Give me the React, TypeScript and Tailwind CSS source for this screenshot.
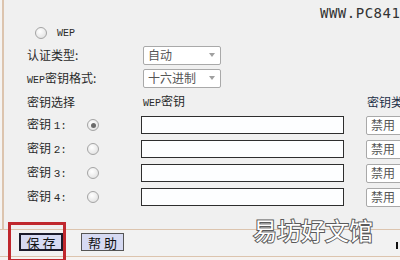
import React from "react";

const cjk = "font-['Noto_Sans_CJK_SC',sans-serif]";
const mono = "font-['Liberation_Mono','Noto_Sans_CJK_SC',monospace]";

const Radio = ({ checked = false }: { checked?: boolean }) => (
  <span className="flex h-[12px] w-[12px] shrink-0 items-center justify-center rounded-full border border-[#a4a4a4] bg-[radial-gradient(circle_at_40%_35%,#ffffff,#dcdcdc)]">
    {checked && <span className="h-[5px] w-[5px] rounded-full bg-[#6a6a6a]" />}
  </span>
);

const Select = ({ value, className = "" }: { value: string; className?: string }) => (
  <div
    className={`flex h-[19px] shrink-0 items-center justify-between rounded-[2px] border border-[#a9a9a9] bg-white pl-[4px] pr-[5px] text-[12px] text-[#555] ${className}`}
  >
    <span className="leading-none">{value}</span>
    <span className="h-0 w-0 border-x-[3px] border-t-[4px] border-x-transparent border-t-[#a0a0a0]" />
  </div>
);

const keys = [1, 2, 3, 4];

export default function App() {
  return (
    <div className={`relative h-[260px] w-[400px] overflow-hidden bg-[#f5f3f1] ${cjk} text-[#2a2a2a]`}>
      {/* main panel */}
      <div className="ml-[2px] h-[229px] overflow-hidden border-l-2 border-[#dcc4ae] bg-[#f0f0f0] pt-[22px]">
        <div className="flex h-[22px] items-center pl-[31px]">
          <Radio />
          <span className={`ml-[10px] text-[10px] ${mono}`}>WEP</span>
        </div>

        <div className="flex h-[22px] items-center pl-[23px]">
          <span className="w-[116px] shrink-0 text-[12px]">认证类型:</span>
          <Select value="自动" className="w-[78px]" />
        </div>

        <div className="flex h-[24px] items-center pl-[23px]">
          <span className="w-[116px] shrink-0 whitespace-nowrap text-[12px]">
            <span className={`text-[10px] ${mono}`}>WEP</span>密钥格式:
          </span>
          <Select value="十六进制" className="w-[78px]" />
        </div>

        <div className="flex h-[23px] items-center whitespace-nowrap pl-[23px] text-[12px]">
          <span className="w-[116px] shrink-0">密钥选择</span>
          <span className="w-[224px] shrink-0">
            <span className={`text-[10px] ${mono}`}>WEP</span>密钥
          </span>
          <span className="shrink-0 text-[#1d2f47]">密钥类型</span>
        </div>

        {keys.map((k) => (
          <div key={k} className="flex h-[24px] items-center whitespace-nowrap pl-[23px] text-[12px]">
            <span className="w-[60px] shrink-0">
              密钥 <span className={`text-[11px] ${mono}`}>{k}:</span>
            </span>
            <span className="w-[54px] shrink-0">
              <Radio checked={k === 1} />
            </span>
            <div className="h-[18px] w-[203px] shrink-0 border border-[#2e2e2e] bg-[#fdfeff]" />
            <Select value="禁用" className="ml-[22px] w-[60px]" />
          </div>
        ))}
      </div>

      {/* button bar */}
      <div className="h-[28px] border-y border-[#dcc4ae] bg-[#f2f2f2]">
        <div className="flex items-center gap-[18px] pl-[19px] pt-[3px]">
          <button className="h-[18px] w-[44px] border-2 border-[#1b1b2b] bg-[#d6daf2] text-[13px] leading-none text-[#111]">
            保 存
          </button>
          <button className="h-[18px] w-[43px] border border-[#555] bg-[#d6daf2] text-[13px] leading-none text-[#111]">
            帮 助
          </button>
        </div>
      </div>

      {/* annotation and watermarks */}
      <div className="absolute left-[8px] top-[222px] h-[40px] w-[58px] border-[3px] border-[#c0282e]" />
      <div className="absolute right-[2px] top-[242px] h-[7px] w-[2px] bg-[#111]" />
      <div className="absolute left-[320px] top-[3px] font-['DejaVu_Sans_Mono',monospace] text-[14px] tracking-[0.5px] text-[#333]">
        WWW.PC841
      </div>
      <div className="absolute left-[253px] top-[212px] text-[24px] font-normal text-white [-webkit-text-stroke:2px_#5a5a5a] [paint-order:stroke_fill]">
        易坊好文馆
      </div>
    </div>
  );
}
